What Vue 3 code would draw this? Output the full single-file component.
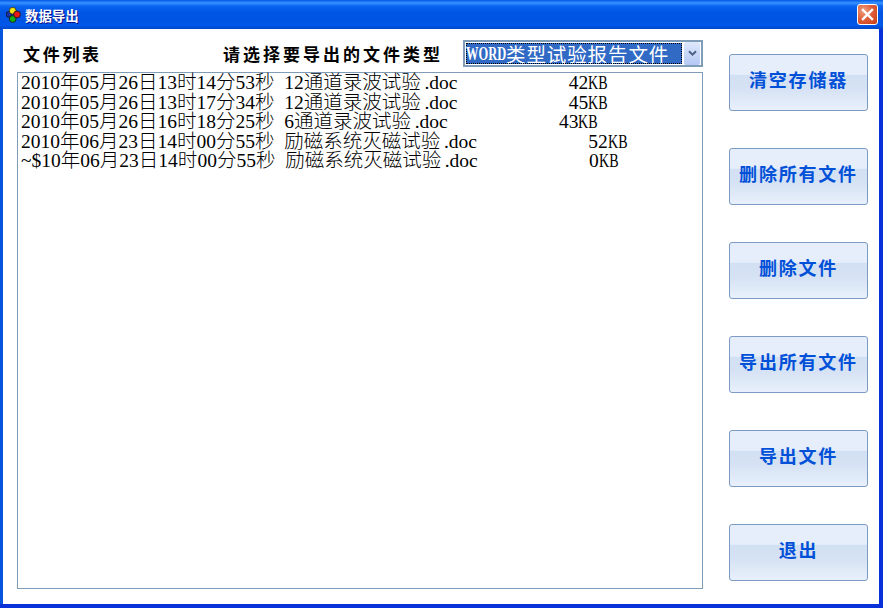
<script setup>
const rows = [
  '2010年05月26日13时14分53秒 12通道录波试验.doc           42KB',
  '2010年05月26日13时17分34秒 12通道录波试验.doc           45KB',
  '2010年05月26日16时18分25秒 6通道录波试验.doc           43KB',
  '2010年06月23日14时00分55秒 励磁系统灭磁试验.doc           52KB',
  '~$10年06月23日14时00分55秒 励磁系统灭磁试验.doc           0KB'
]
const kindOf = (t) => {
  if (/[\u4e00-\u9fff]/.test(t)) return 'cjk'
  if (t === 'KB') return 'kb'
  if (t === '.doc') return 'ext'
  if (t.trim() === '') return 'gap'
  return 'num'
}
const runs = (s) =>
  s.match(/[\u4e00-\u9fff]+|KB|\.doc|\s+|[0-9~$]+/g).map((t) => ({ t, kind: kindOf(t) }))
const buttons = ['清空存储器', '删除所有文件', '删除文件', '导出所有文件', '导出文件', '退出']
</script>

<template>
  <div class="window">
    <header class="titlebar">
      <svg class="app-icon" width="16" height="16" viewBox="0 0 16 16">
        <circle cx="2.9" cy="7.4" r="2.8" fill="#1a2fb0" stroke="#111" stroke-width=".8"/>
        <circle cx="6.7" cy="3.7" r="3.4" fill="#f6e412" stroke="#222" stroke-width=".8"/>
        <circle cx="6.7" cy="12" r="3.4" fill="#16b016" stroke="#111" stroke-width=".8"/>
        <circle cx="11" cy="7.4" r="3.4" fill="#e81818" stroke="#111" stroke-width=".8"/>
      </svg>
      <span class="title">数据导出</span>
      <button class="close" aria-label="关闭">
        <svg width="13" height="13" viewBox="0 0 13 13"><path d="M2 2l9 9M11 2l-9 9" stroke="#fff" stroke-width="2.4" stroke-linecap="square"/></svg>
      </button>
    </header>
    <main class="client">
      <section class="left">
        <div class="toolbar">
          <span class="label list-label">文件列表</span>
          <span class="label type-label">请选择要导出的文件类型</span>
          <div class="select">
            <div class="select-value"><span class="sel-latin">WORD</span><span class="sel-cjk">类型试验报告文件</span></div>
            <div class="arrow">
              <svg width="9" height="7" viewBox="0 0 9 7"><path d="M1 1.2l3.5 3.5L8 1.2" fill="none" stroke="#4d6185" stroke-width="2"/></svg>
            </div>
          </div>
        </div>
        <div class="list">
          <div v-for="(r, i) in rows" :key="i" class="row"><span v-for="(p, j) in runs(r)" :key="j" :class="p.kind">{{ p.t }}</span></div>
        </div>
      </section>
      <aside class="actions">
        <button v-for="b in buttons" :key="b" class="action">{{ b }}</button>
      </aside>
    </main>
  </div>
</template>

<style>
html, body { margin: 0; background: #fff; overflow: hidden; }
</style>

<style scoped>
.window {
  width: 883px;
  height: 608px;
  display: flex;
  flex-direction: column;
  background: #0831d9;
  font-family: "Noto Sans CJK SC", sans-serif;
  overflow: hidden;
}
.titlebar {
  height: 29px;
  flex: none;
  display: flex;
  align-items: center;
  padding: 0 5px 0 6px;
  box-sizing: border-box;
  background: linear-gradient(180deg, #0058e6 0, #3a93ff 3px, #0a66f0 6px, #0055e5 12px, #0054e3 20px, #0058ea 25px, #0048c8 29px);
}
.app-icon { flex: none; margin-top: 1px; }
.title {
  margin-left: 3px;
  color: #fff;
  font-size: 13.4px;
  font-weight: 700;
  line-height: 16px;
  text-shadow: 1px 1px 0 #0f1089;
}
.close {
  margin-left: auto;
  width: 21px;
  height: 21px;
  padding: 0;
  display: flex;
  align-items: center;
  justify-content: center;
  border: 1px solid #fff;
  border-radius: 3px;
  background: radial-gradient(circle at 30% 30%, #f0a080 0, #e0603c 45%, #c83c14 100%);
}
.client {
  flex: 1;
  min-height: 0;
  display: flex;
  margin: 0 4px 4px 3px;
  background: #fff;
  box-shadow: -3px 0 0 #0855dd;
}
.left {
  width: 700px;
  flex: none;
  box-sizing: border-box;
  padding: 11px 0 15px 14px;
  display: flex;
  flex-direction: column;
}
.toolbar {
  height: 27px;
  margin-bottom: 5px;
  display: flex;
  align-items: center;
  flex: none;
}
.label {
  font-size: 17px;
  font-weight: 700;
  color: #000;
  white-space: nowrap;
}
.list-label { margin-left: 6px; letter-spacing: 2.7px; width: 200px; }
.type-label { letter-spacing: 3px; width: 240px; }
.select {
  width: 240px;
  height: 27px;
  box-sizing: border-box;
  border: 2px solid #7f9db9;
  display: flex;
  align-items: center;
  padding: 1px;
  background: #fff;
}
.select-value {
  width: 216px;
  height: 21px;
  background: #316ac5;
  color: #fff;
  outline: 1px dotted #000;
  outline-offset: -1px;
  display: flex;
  align-items: center;
  white-space: nowrap;
  line-height: 21px;
}
.sel-latin {
  display: inline-block;
  width: 40px;
  font-family: "Liberation Serif", serif;
  font-size: 19.5px;
  font-weight: 700;
  transform: scaleX(.64);
  transform-origin: left center;
}
.sel-cjk {
  font-size: 19.5px;
  letter-spacing: .9px;
  font-weight: 400;
}
.arrow {
  margin-left: auto;
  width: 16px;
  height: 23px;
  border-radius: 2px;
  background: linear-gradient(180deg, #dfe8fc, #b4c8f4);
  display: flex;
  align-items: center;
  justify-content: center;
}
.list {
  flex: 1;
  min-height: 0;
  border: 1px solid #7f9db9;
  width: 686px;
  box-sizing: border-box;
  padding: 0 0 0 3px;
  color: #000;
}
.row {
  height: 19.5px;
  line-height: 19.5px;
  white-space: pre;
  position: relative;
  top: -2px;
}
.num {
  font-family: "Liberation Serif", serif;
  font-size: 19.5px;
}
.gap {
  font-family: "Liberation Mono", monospace;
  font-size: 16.25px;
}
.ext {
  font-family: "Liberation Serif", serif;
  font-size: 19.5px;
  padding: 0 4px 0 3.5px;
}
.kb {
  display: inline-block;
  width: 19.5px;
  font-family: "Liberation Serif", serif;
  font-size: 19.5px;
  transform: scaleX(.72);
  transform-origin: left center;
}
.cjk {
  font-family: "Noto Sans CJK SC", sans-serif;
  font-size: 19.5px;
  font-weight: 300;
  line-height: 19.5px;
}
.actions {
  flex: 1;
  display: flex;
  flex-direction: column;
  justify-content: space-between;
  padding: 25px 0 23px 26px;
  box-sizing: border-box;
  width: 176px;
}
.action {
  width: 139px;
  height: 57px;
  flex: none;
  padding: 0 0 8px;
  border: 1px solid #7c9ac4;
  border-radius: 3px;
  background: linear-gradient(180deg, #e6eefb 0, #e6eefb 35%, #d2e0f3 37%, #d5e2f4 60%, #e8f0fb 100%);
  color: #0050d8;
  font-family: "Noto Sans CJK SC", sans-serif;
  font-size: 18px;
  font-weight: 700;
  letter-spacing: 1.8px;
}
</style>
